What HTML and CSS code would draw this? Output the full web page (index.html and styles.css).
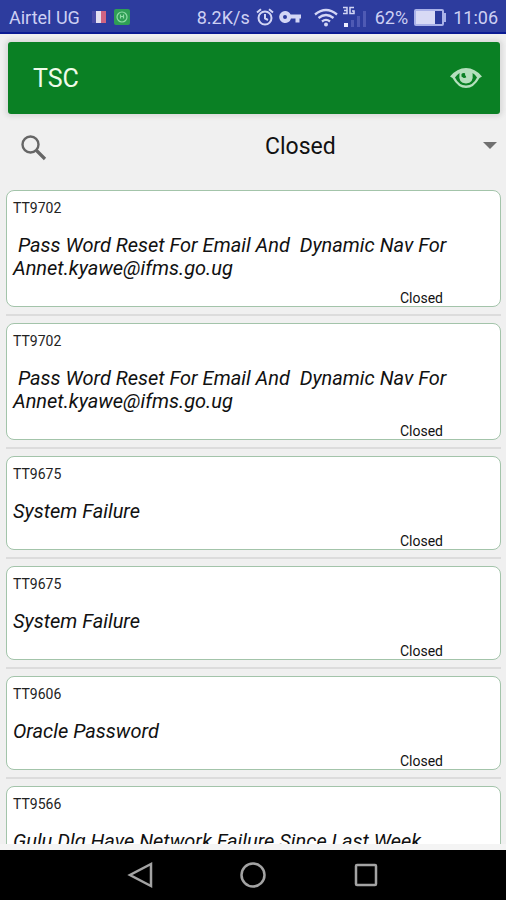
FILE: index.html
```html
<!DOCTYPE html>
<html lang="en">
<head>
<meta charset="utf-8">
<meta name="viewport" content="width=device-width, initial-scale=1">
<title>TSC</title>
<link rel="stylesheet" href="styles.css">
</head>
<body>
<div class="status">
  <span>Airtel UG</span>
  <svg class="flag" width="14" height="12" viewBox="0 0 14 12"><path fill="#4a4ba8" d="M0 0h5v12H0z"/><path fill="#e4dff0" d="M4 0h5v12H4z"/><path fill="#cf6482" d="M9 0h5v12H9z"/></svg>
  <svg class="badge" width="16" height="16" viewBox="0 0 16 16"><rect width="16" height="16" rx="2" fill="#2f9f55"/><g fill="none" stroke="#8fdca6" stroke-width="1.2"><circle cx="8" cy="8" r="5"/><path d="M6.500 5.500v4M9.500 5.500v4M6.500 7.500h3"/></g></svg>
  <span class="speed">8.2K/s</span>
  <svg class="alarm" width="18" height="18" viewBox="0 0 18 18" fill="none" stroke="#d3d6f5" stroke-width="2"><circle cx="9" cy="10" r="6.5"/><path d="M1 4.5l4-3.3M17 4.5l-4-3.3M9 6v4.5l3 1.5"/></svg>
  <svg class="key" width="23" height="14" viewBox="0 0 23 14"><path fill="#d3d6f5" fill-rule="evenodd" d="M6 1a6 6 0 0 1 5.600 3.500H22v4h-1.500v4h-4v-4h-4.500A6 6 0 1 1 6 1zm0 4a2 2 0 1 0 0 4 2 2 0 0 0 0-4z"/></svg>
  <svg class="wifi" width="24" height="19" viewBox="0 0 24 19" fill="none" stroke="#d3d6f5" stroke-width="2.300"><path d="M1 6.500Q12-2.500 23 6.500M4.500 10Q12 4 19.500 10M8 13.500Q12 10.300 16 13.500"/><circle cx="12" cy="16.500" r="2" fill="#d3d6f5" stroke="none"/></svg>
  <svg class="signal" width="25" height="22" viewBox="0 0 25 22"><path fill="none" stroke="#d3d6f5" stroke-width="1.500" d="M1 1.500h4v6H1M2 4.500h3M12 1.500H8v6h4V5h-2"/><path fill="#eef" d="M2 17h4v4H2z"/><path fill="#4f5ab4" d="M9 14h3v7H9zM15 10h3v11h-3zM21 5h3v16h-3z"/></svg>
  <span class="percent">62%</span>
  <svg class="battery" width="33" height="17" viewBox="0 0 33 17"><rect x="1" y="1" width="28" height="15" rx="1" fill="#2a3a9b" stroke="#aab2e8" stroke-width="2"/><path fill="#d8daf5" d="M2 2h19v13H2z"/><path fill="#aab2e8" d="M30 4h2v9h-2z"/></svg>
  <span class="time">11:06</span>
</div>
<main class="screen">
  <header class="bar">
    <h1>TSC</h1>
    <button class="view" type="button" aria-label="View">
      <svg width="34" height="24" viewBox="0 0 34 24"><path fill="#b5dfbd" fill-rule="evenodd" d="M1 10.500Q8 2 17 2t16 8.500l-2.500 1.500Q25 22 17 22T3.500 12zM6 11.500Q10 19.500 17 19.500T28 11.500Q26 8 23.500 7q1.500 10.500-6.500 10.500T10.500 7Q8 8.500 6 11.500z"/><path fill="#0a8024" d="M12.500 8Q14 6.500 17 7.500q-1 3 1.500 4-3 2.500-6-1z"/><path fill="#b5dfbd" d="M16 5h7q1.500 9.500-5 10-4.500 0-5.500-4 3 2 5 0Q15.500 9 16 5z"/></svg>
    </button>
  </header>
  <div class="filter">
    <button class="search" type="button" aria-label="Search">
      <svg width="28" height="28" viewBox="0 0 28 28" fill="none" stroke="#666"><circle cx="10.500" cy="10.500" r="8" stroke-width="2.400"/><path stroke-width="3.200" d="M16.500 16.500l8.500 8.500"/></svg>
    </button>
    <div class="spinner">
      <select aria-label="Ticket status"><option>Closed</option></select>
      <svg class="caret" width="14" height="9" viewBox="0 0 14 9"><path fill="#707070" d="M0 1h14L7 8z"/></svg>
    </div>
  </div>
  <ul class="list">
    <li><article class="card"><p class="id">TT9702</p><h2> Pass Word Reset For Email And  Dynamic Nav For Annet.kyawe@ifms.go.ug</h2><p class="state">Closed</p></article></li>
    <li><article class="card"><p class="id">TT9702</p><h2> Pass Word Reset For Email And  Dynamic Nav For Annet.kyawe@ifms.go.ug</h2><p class="state">Closed</p></article></li>
    <li><article class="card"><p class="id">TT9675</p><h2>System Failure</h2><p class="state">Closed</p></article></li>
    <li><article class="card"><p class="id">TT9675</p><h2>System Failure</h2><p class="state">Closed</p></article></li>
    <li><article class="card"><p class="id">TT9606</p><h2>Oracle Password</h2><p class="state">Closed</p></article></li>
    <li><article class="card"><p class="id">TT9566</p><h2>Gulu Dlg Have Network Failure Since Last Week</h2><p class="state">Closed</p></article></li>
  </ul>
</main>
<nav class="nav">
  <button type="button" aria-label="Back"><svg width="28" height="28" viewBox="0 0 28 28"><path d="M25 3v22L4 14z"/></svg></button>
  <button type="button" aria-label="Home"><svg width="28" height="28" viewBox="0 0 28 28"><circle cx="14" cy="14" r="11.500"/></svg></button>
  <button type="button" aria-label="Recents"><svg width="28" height="28" viewBox="0 0 28 28"><rect x="4" y="4" width="20" height="20" rx="1"/></svg></button>
</nav>
</body>
</html>
```
FILE: styles.css
```css
* { box-sizing: border-box; }
body {
  margin: 0;
  height: 100vh;
  display: flex;
  flex-direction: column;
  background: #f0f0f0;
  color: #111;
  font-family: Roboto, "Liberation Sans", sans-serif;
}
h1, h2, p, ul { margin: 0; padding: 0; font-weight: 400; }
button { border: 0; padding: 0; background: none; display: flex; }
svg { display: block; flex: none; }

.status {
  flex: none;
  display: flex;
  align-items: center;
  height: 34px;
  padding: 2px 8px 0 9px;
  background: #2d3c9e;
  border-bottom: 2px solid #0b1b93;
  color: #cdd0f3;
  font-size: 18px;
  white-space: nowrap;
}
.flag { margin-left: 12px; }
.badge { margin-left: 8px; }
.speed { margin-left: auto; }
.alarm { margin-left: 6px; }
.key { margin-left: 5px; }
.wifi { margin-left: 12px; }
.signal { margin-left: 4px; }
.percent { margin-left: 8px; }
.battery { margin-left: 6px; }
.time { margin-left: 6px; }

.screen {
  flex: 1;
  min-height: 0;
  display: flex;
  flex-direction: column;
  border-bottom: 6px solid #f4f4f4;
}
.bar {
  flex: none;
  display: flex;
  align-items: center;
  justify-content: space-between;
  height: 72px;
  margin: 8px 6px 0 8px;
  padding: 0 17px 0 25px;
  border-radius: 3px;
  background: #0a8024;
  box-shadow: 0 0 4px 3px #dcdcdc;
  color: #effbe9;
}
.bar h1 { font-size: 25px; }

.filter {
  flex: none;
  display: grid;
  grid-template-columns: 1fr 1fr;
  align-items: center;
  height: 64px;
  padding-top: 4px;
}
.search { margin-left: 20px; justify-self: start; }
.spinner { position: relative; }
.spinner select {
  appearance: none;
  width: 100%;
  height: 40px;
  padding: 0 24px 4px 12px;
  border: 0;
  background: none;
  color: #111;
  font: 23px Roboto, "Liberation Sans", sans-serif;
}
.caret { position: absolute; right: 9px; top: 13px; pointer-events: none; }

.list {
  flex: 1;
  min-height: 0;
  overflow: hidden;
  margin-top: 12px;
  padding: 0 5px 0 6px;
  list-style: none;
}
.list li { padding-bottom: 7px; margin-bottom: 7px; border-bottom: 2px solid #dcdcdc; }
.card {
  padding: 8px 6px 0;
  border: 1px solid #a3c4aa;
  border-radius: 8px;
  background: #fff;
}
.id { font-size: 14px; line-height: 18px; color: #222; }
.card h2 {
  margin: 17px 0 10px;
  font-size: 20px;
  line-height: 23px;
  font-style: italic;
  white-space: pre-wrap;
}
.state { padding-right: 51px; font-size: 14px; line-height: 16px; text-align: right; }

.nav {
  flex: none;
  display: flex;
  align-items: center;
  justify-content: center;
  gap: 85px;
  height: 50px;
  background: #000;
}
.nav svg { fill: none; stroke: #a3a3a3; stroke-width: 2.5; }
```
